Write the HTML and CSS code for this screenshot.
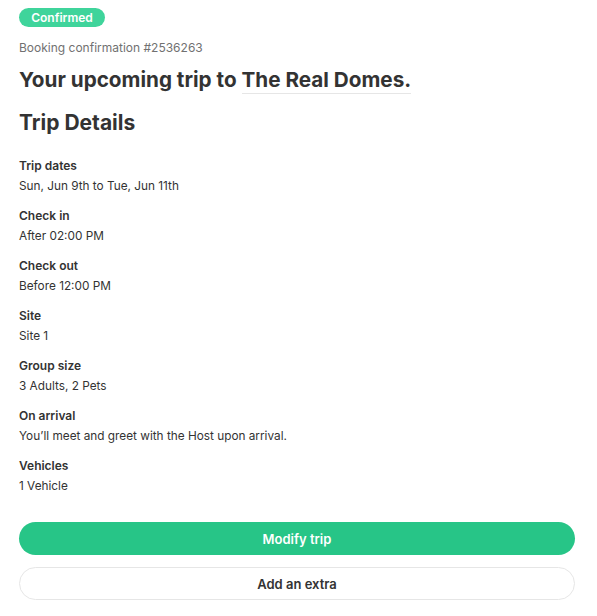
FILE: index.html
```html
<!DOCTYPE html>
<html lang="en">
<head>
<meta charset="utf-8">
<link rel="stylesheet" href="styles.css">
</head>
<body>
<main class="page">
  <span class="badge">Confirmed</span>
  <p class="booking">Booking confirmation #2536263</p>
  <h1 class="title">Your upcoming trip to <span class="place">The Real Domes.</span></h1>
  <h2 class="section">Trip Details</h2>
  <dl class="details">
    <div class="item"><dt>Trip dates</dt><dd>Sun, Jun 9th to Tue, Jun 11th</dd></div>
    <div class="item"><dt>Check in</dt><dd>After 02:00 PM</dd></div>
    <div class="item"><dt>Check out</dt><dd>Before 12:00 PM</dd></div>
    <div class="item"><dt>Site</dt><dd>Site 1</dd></div>
    <div class="item"><dt>Group size</dt><dd>3 Adults, 2 Pets</dd></div>
    <div class="item"><dt>On arrival</dt><dd>You’ll meet and greet with the Host upon arrival.</dd></div>
    <div class="item"><dt>Vehicles</dt><dd>1 Vehicle</dd></div>
  </dl>
  <div class="actions">
    <button class="btn btn-primary">Modify trip</button>
    <button class="btn btn-secondary">Add an extra</button>
  </div>
</main>
</body>
</html>
```
FILE: styles.css
```css
* { box-sizing: border-box; }
html, body { margin: 0; padding: 0; background: #fff; }
body {
  font-family: Inter, "Noto Sans", "Liberation Sans", sans-serif;
  color: #333;
}
.page {
  padding: 8px 22px 0 19px;
  display: flex;
  flex-direction: column;
  align-items: flex-start;
}
.badge {
  display: inline-flex;
  align-items: center;
  justify-content: center;
  height: 19px;
  width: 86px;
  border-radius: 10px;
  background: #3fd49b;
  color: #fff;
  font-size: 12px;
  font-weight: 600;
}
.booking {
  margin: 13px 0 0;
  font-size: 12px;
  line-height: 16px;
  color: #717171;
}
.title {
  margin: 11px 0 0;
  font-size: 20.7px;
  line-height: 26px;
  font-weight: 700;
  color: #333;
}
.place {
  border-bottom: 1px solid #e6e6e6;
  padding-bottom: 1px;
}
.section {
  margin: 16px 0 0;
  font-size: 21px;
  line-height: 28px;
  font-weight: 700;
  color: #333;
}
.details {
  margin: 19px 0 0;
  display: flex;
  flex-direction: column;
  gap: 10px;
  width: 100%;
}
.item dt {
  font-size: 12px;
  line-height: 20px;
  font-weight: 600;
  color: #333;
}
.item dd {
  margin: 0;
  font-size: 11.8px;
  line-height: 20px;
  color: #333;
}
.actions {
  margin-top: 26px;
  width: 100%;
  display: flex;
  flex-direction: column;
  gap: 12px;
}
.btn {
  width: 100%;
  height: 33px;
  border-radius: 17px;
  font-family: inherit;
  font-size: 13px;
  font-weight: 600;
  cursor: pointer;
}
.btn-primary {
  background: #27c587;
  border: 0;
  color: #fff;
}
.btn-secondary {
  background: #fff;
  border: 1px solid #e6e6e6;
  color: #333;
}
```
